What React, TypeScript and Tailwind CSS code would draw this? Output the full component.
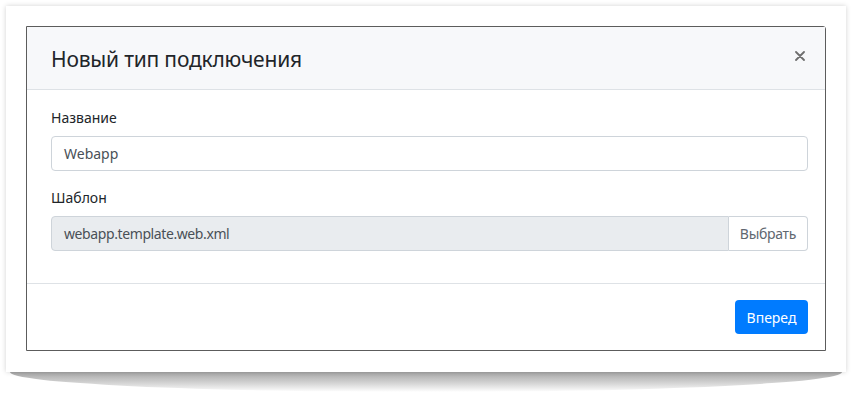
export default function App() {
  return (
    <div className="w-[860px] h-[401px] bg-white overflow-hidden pt-[6px] px-[6px]" style={{ fontFamily: '"Noto Sans", "Open Sans", sans-serif' }}>
      <div className="relative w-[840px]">
        <div className="relative z-10 bg-white pt-5 pb-[21px] px-5 shadow-[0_0_5px_rgba(0,0,0,0.18)]">
          <div className="border border-[#5c5c5c] rounded-tr-[3px] bg-white">
            <div className="h-[63px] flex items-center justify-between pl-6 pr-[20px] pt-[3px] bg-[#f7f8fa] border-b border-[#dee2e6]">
              <h5 className="text-[21px] tracking-[-0.2px] text-[#212529] leading-none">Новый тип подключения</h5>
              <svg width="10" height="10" viewBox="0 0 10 10" className="-mt-[8px]">
                <path d="M1 1 L9 9 M9 1 L1 9" stroke="#6e6e6e" strokeWidth="1.8" strokeLinecap="round" />
              </svg>
            </div>
            <div className="pl-6 pr-[17px] pt-[17px] pb-[32px] text-[14px]">
              <label className="block text-[#212529] leading-[21px] mb-[8px]">Название</label>
              <div className="h-[35px] border border-[#ced4da] rounded-[4px] px-3 flex items-center text-[#495057]">Webapp</div>
              <label className="block text-[#212529] leading-[21px] mt-[16px] mb-[8px]">Шаблон</label>
              <div className="flex h-[35px]">
                <div className="flex-1 bg-[#e9ecef] border border-[#ced4da] rounded-l-[4px] px-3 flex items-center text-[#495057] tracking-[-0.4px]">webapp.template.web.xml</div>
                <div className="w-[79px] border border-l-0 border-[#ced4da] rounded-r-[4px] bg-white flex items-center justify-center text-[#5f6770] tracking-[-0.3px]">Выбрать</div>
              </div>
            </div>
            <div className="border-t border-[#dee2e6] pl-6 pr-[17px] pt-4 pb-4 flex justify-end">
              <button className="h-[34px] w-[73px] rounded-[4px] bg-[#007bff] text-white text-[14px]">Вперед</button>
            </div>
          </div>
        </div>
        <div className="mx-[4px] h-[20px] bg-gradient-to-b from-[#a6a6a6] via-[#cfcfcf] to-white rounded-b-[50%_100%]"></div>
      </div>
    </div>
  );
}
